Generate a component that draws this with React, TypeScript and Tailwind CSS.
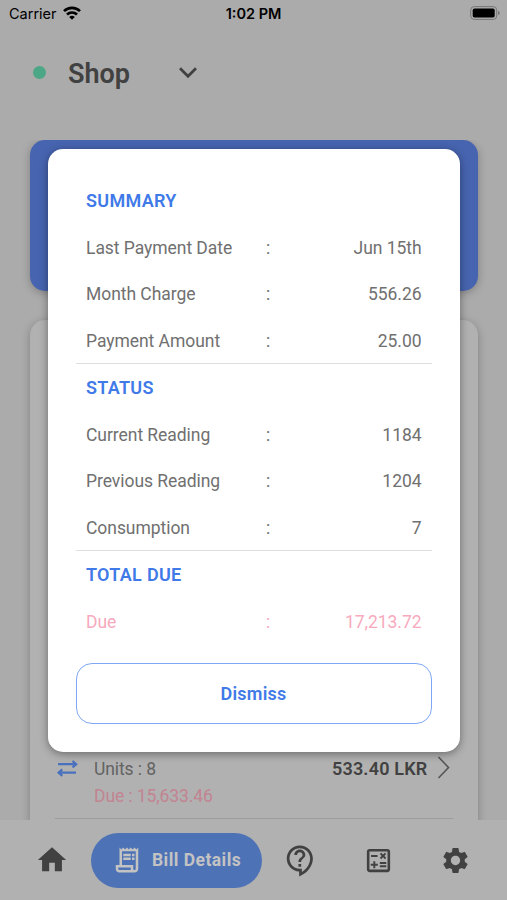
import { useState } from 'react'
import { MdHome, MdOutlineReceiptLong, MdOutlineContactSupport, MdOutlineCalculate, MdSettings } from 'react-icons/md'

const sections = [
  {
    title: 'SUMMARY',
    rows: [
      ['Last Payment Date', 'Jun 15th'],
      ['Month Charge', '556.26'],
      ['Payment Amount', '25.00'],
    ],
  },
  {
    title: 'STATUS',
    rows: [
      ['Current Reading', '1184'],
      ['Previous Reading', '1204'],
      ['Consumption', '7'],
    ],
  },
  { title: 'TOTAL DUE', due: true, rows: [['Due', '17,213.72']] },
]

function StatusBar() {
  return (
    <div className="h-7 pl-[9px] pr-[7px] flex items-center font-['Inter',sans-serif] text-black">
      <div className="w-[163px] flex items-center gap-[6px] text-[14.5px]">
        <span>Carrier</span>
        <svg className="-mt-[2px]" width="18" height="14" viewBox="0 0 18 14" fill="none" stroke="currentColor" strokeWidth="2.7">
          <path d="M1 5.1a11.5 11.5 0 0 1 16 0" />
          <path d="M4 8.5a7.2 7.2 0 0 1 10 0" />
          <path d="M9 13.8L6.2 11a4 4 0 0 1 5.6 0z" fill="currentColor" stroke="none" />
        </svg>
      </div>
      <div className="w-[163px] text-center text-[14.5px] font-semibold whitespace-nowrap">1:02 PM</div>
      <svg className="ml-auto -mt-[2px]" width="30" height="14" viewBox="0 0 30 14">
        <rect x=".7" y=".6" width="26" height="12.8" rx="3.5" fill="none" stroke="#777" />
        <rect x="2.7" y="2.4" width="22" height="9.2" rx="1.8" fill="#000" />
        <path d="M28 4.7v4.6q1.8-.8 1.8-2.3t-1.8-2.3z" fill="#777" />
      </svg>
    </div>
  )
}

function BottomNav() {
  return (
    <div className="h-20 shrink-0 bg-[#b1b1b1] flex items-center text-[#414141] relative">
      <div className="w-[91px] flex justify-center pl-[13px]"><MdHome size={34} /></div>
      <div className="w-[171px] h-[55px] rounded-full bg-[#4e72b6] text-[#c3c3c3] flex items-center pl-[21px] gap-[10px]">
        <MdOutlineReceiptLong size={30} />
        <span className="text-[17.5px] font-bold tracking-[0.45px] whitespace-nowrap">Bill Details</span>
      </div>
      <div className="w-[77px] flex justify-center"><MdOutlineContactSupport size={33} /></div>
      <div className="w-[78px] flex justify-center"><MdOutlineCalculate size={31} /></div>
      <div className="w-[78px] flex justify-center pr-[2px]"><MdSettings size={31} /></div>
    </div>
  )
}

function BillModal({ onDismiss }: { onDismiss: () => void }) {
  return (
    <div className="absolute inset-0 z-10 pt-[149px] flex justify-center items-start">
      <div className="w-[412px] h-[603px] bg-white rounded-[15px] px-7 pt-[29px] shadow-[0_2px_8px_rgba(0,0,0,0.4)]">
        {sections.map(section => (
          <div key={section.title}>
            <div className="h-[46.5px] px-[10.5px] pb-[2px] flex items-center text-[18px] font-semibold tracking-[0.3px] text-[#3f7ae8]">{section.title}</div>
            {section.rows.map(([label, value]) => (
              <div
                key={label}
                className={`h-[46.5px] pl-[10.5px] pr-[10px] flex items-center text-[17.5px] tracking-[-0.05px] ${section.due ? 'text-[#f7a9bd]' : 'text-[#707070]'}`}
              >
                <span className="w-[180px]">{label}</span>
                <span>:</span>
                <span className="ml-auto">{value}</span>
              </div>
            ))}
            {!section.due && <div className="-mt-px mb-px h-px bg-[#dedede]" />}
          </div>
        ))}
        <button
          onClick={onDismiss}
          className="mt-[18px] w-full h-[61px] rounded-2xl border border-[#7ea7f5] text-[18px] font-semibold tracking-[0.2px] text-[#3f7ae8]"
        >
          Dismiss
        </button>
      </div>
    </div>
  )
}

export default function App() {
  const [open, setOpen] = useState(true)

  return (
    <div className="relative w-[507px] h-[900px] overflow-hidden bg-[#ababab] flex flex-col font-['Roboto',sans-serif]">
      <StatusBar />

      {/* Location picker */}
      <div className="h-[112px] shrink-0 pl-[33px] pt-[27px] flex items-start">
        <div className="h-9 flex items-center">
          <div className="-mt-px w-[13px] h-[13px] rounded-full bg-[#4ba785]" />
          <span className="ml-[22px] w-[111px] pt-[2px] text-[27px] font-semibold text-[#414141]">Shop</span>
          <svg width="18" height="12" viewBox="0 0 18 12" fill="none" stroke="#414141" strokeWidth="2.7">
            <path d="M1 1.3l8 8 8-8" />
          </svg>
        </div>
      </div>

      <div className="flex-1 min-h-0 overflow-hidden pl-[30px] pr-[29.5px]">
        <div className="h-[151px] rounded-[15px] bg-[#4764b0] shadow-[0_2px_8px_rgba(0,0,0,0.25)]" />

        {/* Bill history */}
        <div className="mt-[29px] h-[600px] rounded-[15px] bg-[#b1b1b1] shadow-[0_2px_8px_rgba(0,0,0,0.25)] px-[25px] pt-[435px]">
          <div className="h-[64px] border-b border-[#9c9c9c] flex items-start">
            <svg className="mt-[5px] ml-[2px]" width="21" height="17" viewBox="0 0 21 17" fill="none" stroke="#4a71bd" strokeWidth="2.2">
              <path d="M1 4.2h18M15.5 1l3.7 3.2-3.7 3.2" />
              <path d="M19 12.6H2M5.3 9.4l-3.7 3.2 3.7 3.2" />
            </svg>
            <div className="ml-[16px] pt-px text-[17.5px] leading-[27px] tracking-[-0.1px]">
              <div className="text-[#636363]">Units : 8</div>
              <div className="text-[#c28491]">Due : 15,633.46</div>
            </div>
            <div className="ml-auto text-[18px] leading-[27px] font-semibold tracking-[0.2px] text-[#414141]">533.40 LKR</div>
            <svg className="mt-px ml-[9px] mr-[3px]" width="13" height="23" viewBox="0 0 13 23" fill="none" stroke="#555" strokeWidth="1.6">
              <path d="M1.5 1L11.5 11.5 1.5 22" />
            </svg>
          </div>
        </div>
      </div>

      <BottomNav />
      {open && <BillModal onDismiss={() => setOpen(false)} />}
    </div>
  )
}
